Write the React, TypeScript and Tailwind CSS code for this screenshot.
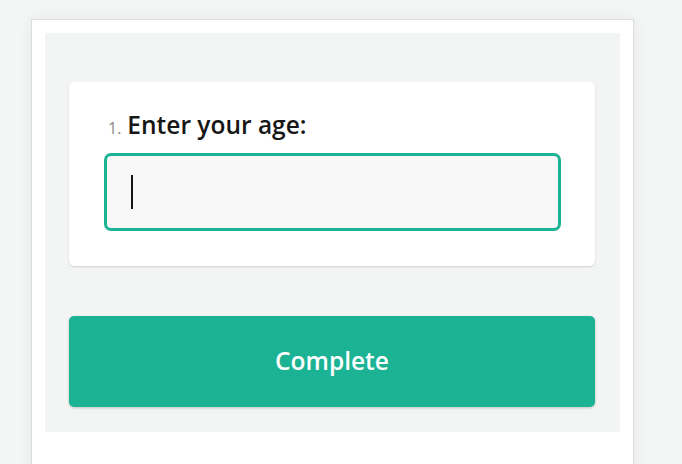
export default function App() {
    return (
        <div className="w-[682px] h-[464px] overflow-hidden bg-[#f4f5f5] font-['Open_Sans',sans-serif]">
            <div className="ml-[31px] mt-[19px] w-[603px] h-[460px] bg-white border border-[#dedede] shadow-[0_0_14px_rgba(0,0,0,0.06)] pt-[13px] pl-[13px]">
                <div className="w-[575px] h-[399px] bg-[#f3f4f4] pt-[49px] px-[24px]">
                    <div className="w-[526px] h-[184px] bg-white rounded-[5px] shadow-[0_1px_2px_rgba(0,0,0,0.15)] pt-[26px] pl-[35px] pr-[34px]">
                        <div className="flex items-baseline pl-[4px] h-[36px]">
                            <span className="text-[16px] text-[#8a8a8a] mr-[6px]">1.</span>
                            <span className="text-[24.5px] font-semibold text-[#161616] leading-[34px]">Enter your age:</span>
                        </div>
                        <div className="mt-[9px] h-[78px] rounded-[7px] border-[3px] border-[#1ab394] bg-[#f8f8f8] flex items-center pl-[24px]">
                            <div className="w-[2px] h-[34px] bg-[#161616]" />
                        </div>
                    </div>
                    <button className="mt-[50px] w-[526px] h-[91px] rounded-[5px] bg-[#1bb394] text-white text-[24.5px] font-semibold shadow-[0_1px_3px_rgba(0,0,0,0.2)]">
                        Complete
                    </button>
                </div>
            </div>
        </div>
    );
}
